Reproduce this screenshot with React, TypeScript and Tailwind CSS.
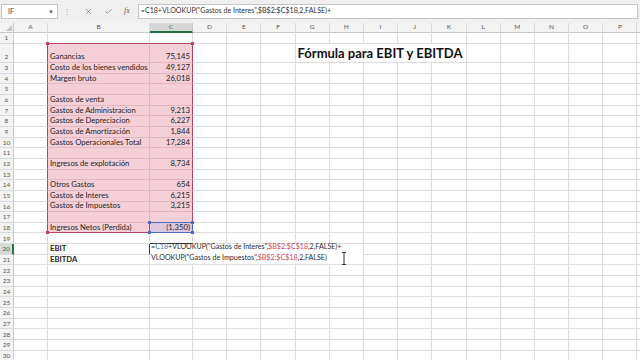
import { Check, X } from 'lucide-react';

const cols = ['A', 'B', 'C', 'D', 'E', 'F', 'G', 'H', 'I', 'J', 'K', 'L', 'M', 'N', 'O', 'P', 'Q'];

const labels: Record<number, string> = {
  2: 'Ganancias',
  3: 'Costo de los bienes vendidos',
  4: 'Margen bruto',
  6: 'Gastos de venta',
  7: 'Gastos de Administracion',
  8: 'Gastos de Depreciacion',
  9: 'Gastos de Amortización',
  10: 'Gastos Operacionales Total',
  12: 'Ingresos de explotación',
  14: 'Otros Gastos',
  15: 'Gastos de Interes',
  16: 'Gastos de Impuestos',
  18: 'Ingresos Netos (Perdida)',
  20: 'EBIT',
  21: 'EBITDA',
};

const values: Record<number, string> = {
  2: '75,145',
  3: '49,127',
  4: '26,018',
  7: '9,213',
  8: '6,227',
  9: '1,844',
  10: '17,284',
  12: '8,734',
  14: '654',
  15: '6,215',
  16: '3,215',
  18: '(1,350)',
};

const rows = Array.from({ length: 30 }, (_, i) => i + 1);

function Handle({ corner, blue }: { corner: 'tl' | 'tr' | 'bl' | 'br'; blue?: boolean }) {
  const place = {
    tl: 'left-[-2px] top-[-2px]',
    tr: 'right-[-2px] top-[-2px]',
    bl: 'left-[-2px] bottom-[-2px]',
    br: 'right-[-2px] bottom-[-2px]',
  }[corner];
  return (
    <span
      className={`absolute z-10 h-[3px] w-[3px] ${place} ${blue ? 'bg-[#4f6bc0]' : 'bg-[#b4455e]'}`}
    />
  );
}

// Colored pieces of the formula (C18 reference in blue, range in red)
function Formula({ second }: { second?: boolean }) {
  if (second) {
    return (
      <>
        VLOOKUP("Gastos de Impuestos",<span className="text-[#d0435a]">$B$2:$C$18</span>,2,FALSE)
      </>
    );
  }
  return (
    <>
      =<span className="text-[#4a6fc4]">C18</span>+VLOOKUP("Gastos de Interes",
      <span className="text-[#d0435a]">$B$2:$C$18</span>,2,FALSE)+
    </>
  );
}

function Cell({ r, c }: { r: number; c: number }) {
  const col = cols[c];
  const inRange = r >= 2 && r <= 18 && (col === 'B' || col === 'C');
  const isC18 = r === 18 && col === 'C';

  let bg = '';
  if (isC18) bg = 'bg-[#dbc8de]';
  else if (inRange) bg = 'bg-[#f5cfd7]';

  let rc = 'border-r-[#dcdcdc]';
  if (col === 'A' && r >= 2 && r <= 18) rc = 'border-r-[#b4455e]';
  else if (col === 'B' && inRange) rc = r === 18 ? 'border-r-[#4f6bc0]' : 'border-r-[#e4b5bf]';
  else if (col === 'C' && inRange) rc = r === 18 ? 'border-r-[#4f6bc0]' : 'border-r-[#b4455e]';
  else if (col === 'B' && r === 20) rc = 'border-r-[#3c3c3c]';

  let bc = 'border-b-[#dcdcdc]';
  if ((col === 'B' || col === 'C') && r === 1) bc = 'border-b-[#b4455e]';
  else if (inRange) {
    if (r === 18) bc = col === 'C' ? 'border-b-[#4f6bc0]' : 'border-b-[#b4455e]';
    else if (r === 17 && col === 'C') bc = 'border-b-[#4f6bc0]';
    else bc = 'border-b-[#e4b5bf]';
  } else if (col === 'C' && r === 19) bc = 'border-b-[#3c3c3c]';

  const bold = r === 20 || r === 21;
  const text = col === 'B' ? labels[r] : col === 'C' ? values[r] : undefined;

  return (
    <div
      className={`relative flex items-end whitespace-nowrap border-r border-b px-[2px] pb-[1px] text-[7.7px] leading-none text-[#1e1e1e] ${bg} ${rc} ${bc} ${
        col === 'C' ? 'justify-end' : ''
      } ${bold ? 'font-bold' : ''}`}
    >
      {text}
      {col === 'B' && r === 2 && <Handle corner="tl" />}
      {col === 'C' && r === 2 && <Handle corner="tr" />}
      {col === 'B' && r === 18 && <Handle corner="bl" />}
      {isC18 && (
        <>
          <Handle corner="tl" blue />
          <Handle corner="tr" blue />
          <Handle corner="bl" blue />
          <Handle corner="br" blue />
        </>
      )}
    </div>
  );
}

function SheetRow({ r }: { r: number }) {
  const cells = [];
  for (let c = 0; c < cols.length; c++) {
    const col = cols[c];
    if (r === 2 && col === 'G') {
      cells.push(
        <div
          key={col}
          className="col-span-5 flex items-end whitespace-nowrap border-r border-b border-[#dcdcdc] px-[2px] pb-[2px] text-[13px] font-bold leading-none text-[#111]"
        >
          Fórmula para EBIT y EBITDA
        </div>
      );
      c += 4;
      continue;
    }
    if (r === 20 && col === 'C') {
      cells.push(
        <div
          key={col}
          className="relative col-span-6 row-span-2 flex flex-col justify-end border-r border-b border-[#dcdcdc] bg-white pb-[1px] pl-[1px] text-[7.1px] leading-[10.67px] whitespace-nowrap text-[#2a2a2a]"
        >
          <div>
            <Formula />
          </div>
          <div>
            <Formula second />
          </div>
          <svg
            className="absolute left-[191px] top-[8px]"
            width="6"
            height="13"
            viewBox="0 0 6 13"
            fill="none"
            stroke="#333"
            strokeWidth="1"
          >
            <path d="M1 0.5h4M3 0.5v12M1 12.5h4" />
          </svg>
        </div>
      );
      c += 5;
      continue;
    }
    if (r === 21 && c >= 2 && c <= 7) continue;
    cells.push(<Cell key={col} r={r} c={c} />);
  }
  return (
    <>
      <div
        className={`flex items-end justify-center border-r border-b border-b-[#dadada] pb-[1px] text-[6.5px] leading-none text-[#555] ${
          r === 20 ? 'border-r-2 border-r-[#217346] bg-[#d8d8d8] text-[#217346]' : 'border-r-[#c8c8c8] bg-[#f3f3f3]'
        }`}
      >
        {r}
      </div>
      {cells}
    </>
  );
}

export default function App() {
  return (
    <div className="h-[360px] w-[640px] overflow-hidden bg-white font-['Lato',sans-serif]">
      {/* Name box + formula bar */}
      <div className="flex h-[22.67px] items-center bg-[#efefef] pl-[1px] pr-[2px]">
        <div className="flex h-[15px] w-[57px] items-center justify-between border border-[#c6c6c6] bg-white pl-[6px] pr-[3px] text-[7px] text-[#444]">
          <span>IF</span>
          <span className="text-[6px] text-[#666]">▼</span>
        </div>
        <span className="ml-[5px] text-[8px] leading-none text-[#aaa]">⋮</span>
        <div className="ml-[13px] flex items-center gap-[11px] text-[#666]">
          <X size={9} strokeWidth={1.5} />
          <Check size={9} strokeWidth={1.5} />
          <span className="font-['Liberation_Serif',serif] text-[8px] italic">fx</span>
        </div>
        <div className="ml-[8px] flex h-[15px] flex-1 items-center border border-[#c6c6c6] bg-white pl-[2px] text-[7.1px] whitespace-nowrap text-[#333]">
          =C18+VLOOKUP("Gastos de Interes",$B$2:$C$18,2,FALSE)+
        </div>
      </div>

      {/* Sheet grid */}
      <div className="grid grid-cols-[14px_34px_102px_43px_repeat(13,34.2px)_1fr] grid-rows-[10.67px_10.67px_19px_repeat(28,10.67px)]">
        <div className="relative border-r border-b border-[#c8c8c8] bg-[#f3f3f3]">
          <svg className="absolute right-[1px] bottom-[1px]" width="6" height="6" viewBox="0 0 6 6">
            <path d="M6 0V6H0Z" fill="#c4c4c4" />
          </svg>
        </div>
        {cols.map((col) => (
          <div
            key={col}
            className={`flex items-center justify-center border-r border-b text-[6.5px] leading-none ${
              col === 'C'
                ? 'border-r-[#c8c8c8] border-b-2 border-b-[#217346] bg-[#d6d6d6] text-[#217346]'
                : 'border-r-[#dadada] border-b-[#c8c8c8] bg-[#f3f3f3] text-[#555]'
            }`}
          >
            {col === 'Q' ? '' : col}
          </div>
        ))}
        {rows.map((r) => (
          <SheetRow key={r} r={r} />
        ))}
      </div>
    </div>
  );
}
